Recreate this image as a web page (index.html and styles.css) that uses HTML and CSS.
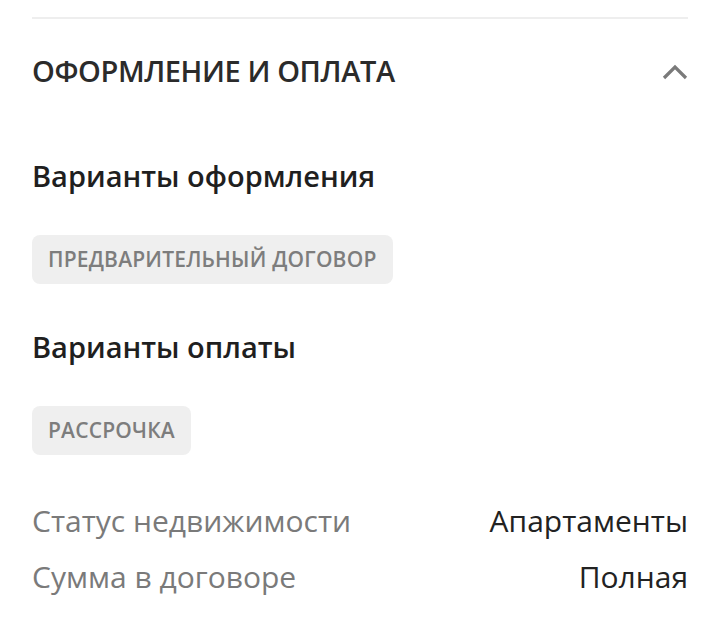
FILE: index.html
```html
<!DOCTYPE html>
<html>
<head>
	<meta charset="UTF-8">
	<meta name="viewport" content="width=device-width, initial-scale=1">
	<title>Оформление и оплата</title>
	<link rel="stylesheet" href="styles.css">
</head>
<body>
	<div class="section">
		<div class="section-head">
			<h2 class="section-title">ОФОРМЛЕНИЕ И ОПЛАТА</h2>
			<svg class="chevron" width="26" height="16" viewBox="0 0 26 16">
				<path d="M2 14 L13 3 L24 14" fill="none" stroke="#7a7a7a" stroke-width="3.2"/>
			</svg>
		</div>

		<h3 class="group-title">Варианты оформления</h3>
		<div class="chips">
			<span class="chip">ПРЕДВАРИТЕЛЬНЫЙ ДОГОВОР</span>
		</div>

		<h3 class="group-title">Варианты оплаты</h3>
		<div class="chips">
			<span class="chip">РАССРОЧКА</span>
		</div>

		<div class="params">
			<div class="param">
				<span class="param-name">Статус недвижимости</span>
				<span class="param-value">Апартаменты</span>
			</div>
			<div class="param">
				<span class="param-name">Сумма в договоре</span>
				<span class="param-value">Полная</span>
			</div>
		</div>
	</div>
</body>
</html>
```

FILE: styles.css
```css
* {
	box-sizing: border-box;
}
body {
	font-family: "Open Sans", Arial, sans-serif;
	margin: 0;
	padding: 0 32px;
	background: #fff;
	color: #222;
}
.section {
	border-top: 2px solid #eeeeee;
	margin-top: 17px;
}
.section-head {
	display: flex;
	justify-content: space-between;
	align-items: center;
	height: 104px;
}
.section-title {
	margin: 0;
	font-size: 29px;
	line-height: 32px;
	font-weight: 600;
	letter-spacing: -0.4px;
	color: #2b2b2b;
}
.chevron {
	display: block;
	margin-top: 2px;
}
.group-title {
	margin: 0;
	margin-top: 45px;
	font-size: 29px;
	font-weight: 600;
	line-height: 36px;
	color: #1f1f1f;
}
.section-head + .group-title {
	margin-top: 35px;
}
.chips {
	display: flex;
	gap: 8px;
	margin-top: 41px;
}
.chip {
	display: inline-block;
	height: 49px;
	line-height: 49px;
	padding: 0 16px;
	border-radius: 8px;
	background: #efefef;
	color: #7d7d7d;
	font-size: 21px;
	font-weight: 600;
	letter-spacing: 0.2px;
}
.params {
	margin-top: 37px;
}
.param {
	display: flex;
	justify-content: space-between;
	align-items: center;
	height: 56px;
	font-size: 30px;
}
.param-name {
	color: #7a7a7a;
}
.param-value {
	color: #222;
}
```
